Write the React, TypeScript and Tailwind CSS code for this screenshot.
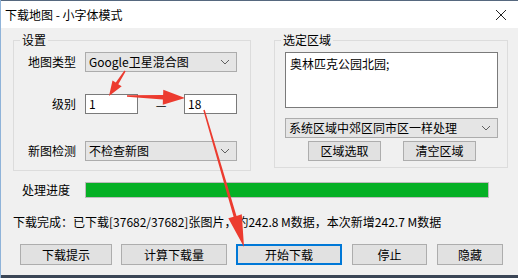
import React from 'react';

const font = { fontFamily: '"Noto Sans CJK SC", "Noto Sans", sans-serif' };

interface ArrowProps {
  x1: number;
  y1: number;
  x2: number;
  y2: number;
  w0: number;
  w1: number;
  hl: number;
  hw: number;
}

// tapered red annotation arrow
const Arrow = ({ x1, y1, x2, y2, w0, w1, hl, hw }: ArrowProps) => {
  const dx = x2 - x1;
  const dy = y2 - y1;
  const len = Math.hypot(dx, dy);
  const ux = dx / len;
  const uy = dy / len;
  const nx = -uy;
  const ny = ux;
  const bx = x2 - ux * hl;
  const by = y2 - uy * hl;
  const pts = [
    [x1 + (nx * w0) / 2, y1 + (ny * w0) / 2],
    [bx + (nx * w1) / 2, by + (ny * w1) / 2],
    [bx + (nx * hw) / 2, by + (ny * hw) / 2],
    [x2, y2],
    [bx - (nx * hw) / 2, by - (ny * hw) / 2],
    [bx - (nx * w1) / 2, by - (ny * w1) / 2],
    [x1 - (nx * w0) / 2, y1 - (ny * w0) / 2],
  ]
    .map((p) => p.map((v) => v.toFixed(1)).join(','))
    .join(' ');
  return <polygon points={pts} fill="#ec3b2f" />;
};

const Chevron = () => (
  <svg width="10" height="6" viewBox="0 0 10 6" className="mr-[6px]">
    <path d="M1 1 L5 5 L9 1" fill="none" stroke="#606060" strokeWidth="1" />
  </svg>
);

const Combo = ({ text, className }: { text: string; className?: string }) => (
  <div
    className={`flex items-center justify-between h-[20px] bg-[#e5e5e5] border border-[#acacac] ${className ?? ''}`}
  >
    <span className="pl-[3px] text-[12px] leading-none">{text}</span>
    <Chevron />
  </div>
);

const Btn = ({
  text,
  className,
  primary,
}: {
  text: string;
  className?: string;
  primary?: boolean;
}) => (
  <div
    className={`flex items-center justify-center h-[21px] bg-[#e1e1e1] text-[12px] leading-none ${
      primary ? 'border-2 border-[#0078d7]' : 'border border-[#adadad]'
    } ${className ?? ''}`}
  >
    {text}
  </div>
);

const Group = ({
  title,
  className,
  children,
}: {
  title: string;
  className?: string;
  children: React.ReactNode;
}) => (
  <div className={`relative border border-[#dcdcdc] ${className ?? ''}`}>
    <span className="absolute -top-[8px] left-[6px] px-[2px] bg-[#f0f0f0] text-[12px] leading-[14px]">
      {title}
    </span>
    {children}
  </div>
);

const App = () => {
  return (
    <div
      className="relative w-[518px] h-[278px] flex flex-col bg-[#f0f0f0] text-black overflow-hidden border-l border-[#8fb3d9]"
      style={font}
    >
      <div className="h-px bg-[#56687f]" />
      {/* title bar */}
      <div className="h-[27px] bg-white flex items-center justify-between pl-[4px] pr-[11px]">
        <span className="text-[12px] leading-none">下载地图 - 小字体模式</span>
        <svg width="12" height="12" viewBox="0 0 12 12">
          <path d="M1 1 L11 11 M11 1 L1 11" stroke="#222" strokeWidth="1" />
        </svg>
      </div>

      <div className="flex-1 flex flex-col pl-[12px] pt-[12px]">
        <div className="flex items-start">
          <Group title="设置" className="w-[238px] h-[131px] pt-[11px]">
            <div className="flex items-center">
              <span className="w-[62px] text-right text-[12px]">地图类型</span>
              <Combo text="Google卫星混合图" className="ml-[9px] w-[152px]" />
            </div>
            <div className="flex items-center mt-[21px]">
              <span className="w-[62px] text-right text-[12px]">级别</span>
              <div className="ml-[9px] w-[53px] h-[20px] bg-white border border-[#7a7a7a] text-[12px] leading-[18px] pl-[3px]">
                1
              </div>
              <span className="w-[46px] text-center text-[12px] pt-[3px]">—</span>
              <div className="w-[53px] h-[20px] bg-white border border-[#7a7a7a] text-[12px] leading-[18px] pl-[3px]">
                18
              </div>
            </div>
            <div className="flex items-center mt-[27px]">
              <span className="w-[62px] text-right text-[12px]">新图检测</span>
              <Combo text="不检查新图" className="ml-[9px] w-[152px]" />
            </div>
          </Group>

          <Group title="选定区域" className="ml-[23px] w-[234px] h-[128px] pt-[11px] pl-[10px]">
            <div className="w-[213px] h-[56px] bg-white border border-[#7a7a7a] text-[12px] leading-[16px] px-[4px] pt-[3px]">
              奥林匹克公园北园;
            </div>
            <Combo text="系统区域中郊区同市区一样处理" className="mt-[10px] w-[213px]" />
            <div className="flex mt-[3px] ml-[23px]">
              <Btn text="区域选取" className="w-[73px] !h-[20px]" />
              <Btn text="清空区域" className="ml-[22px] w-[73px] !h-[20px]" />
            </div>
          </Group>
        </div>

        {/* progress */}
        <div className="flex items-center mt-[10px]">
          <span className="w-[72px] pl-[9px] text-[12px]">处理进度</span>
          <div className="w-[404px] h-[16px] border border-[#bcbcbc] bg-[#e6e6e6]">
            <div className="h-full w-full bg-[#06b025]" />
          </div>
        </div>

        <div className="mt-[15px] text-[12px] leading-[16px] whitespace-nowrap">
          下载完成：已下载[37682/37682]张图片，约242.8 M数据，本次新增242.7 M数据
        </div>

        <div className="flex mt-[14px] ml-[7px]">
          <Btn text="下载提示" className="w-[92px]" />
          <Btn text="计算下载量" className="ml-[9px] w-[106px]" />
          <Btn text="开始下载" className="ml-[9px] w-[106px]" primary />
          <Btn text="停止" className="ml-[10px] w-[75px]" />
          <Btn text="隐藏" className="ml-[10px] w-[66px]" />
        </div>
      </div>

      <div className="h-[3px] bg-[#3b4656]" />

      {/* red annotation arrows */}
      <svg
        className="absolute inset-0 pointer-events-none"
        width="518"
        height="278"
        viewBox="0 0 518 278"
      >
        <Arrow x1={124} y1={71} x2={108} y2={96} w0={1.5} w1={3} hl={15} hw={11} />
        <Arrow x1={126} y1={96} x2={184} y2={98} w0={1.5} w1={4.5} hl={22} hw={15} />
        <Arrow x1={203} y1={110} x2={243} y2={247} w0={1.5} w1={3} hl={32} hw={14} />
      </svg>
    </div>
  );
};

export default App;
